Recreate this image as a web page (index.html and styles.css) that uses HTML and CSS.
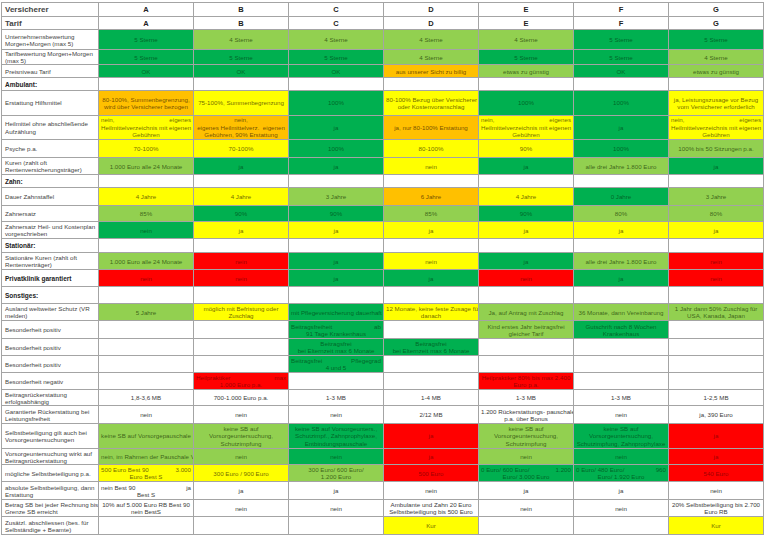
FILE: index.html
```html
<!DOCTYPE html>
<html lang="de">
<head>
<meta charset="utf-8">
<title>Tarifvergleich</title>
<link rel="stylesheet" href="styles.css">
</head>
<body>
<table class="cmp">
<colgroup><col class="c0"><col class="cx"><col class="cx"><col class="cx"><col class="cx"><col class="cx"><col class="cx"><col class="cx"></colgroup>
<tbody>
<tr class="r14 hd"><td class="lb big">Versicherer</td><td>A</td><td>B</td><td>C</td><td>D</td><td>E</td><td>F</td><td>G</td></tr>
<tr class="r13 hd"><td class="lb big">Tarif</td><td>A</td><td>B</td><td>C</td><td>D</td><td>E</td><td>F</td><td>G</td></tr>
<tr class="r20"><td class="lb">Unternehmensbewertung<br>Morgen+Morgen (max 5)</td><td class="dg">5 Sterne</td><td class="lg">4 Sterne</td><td class="lg">4 Sterne</td><td class="lg">4 Sterne</td><td class="lg">4 Sterne</td><td class="dg">5 Sterne</td><td class="dg">5 Sterne</td></tr>
<tr class="r15"><td class="lb">Tarifbewertung Morgen+Morgen<br>(max 5)</td><td class="dg">5 Sterne</td><td class="dg">5 Sterne</td><td class="dg">5 Sterne</td><td class="lg">4 Sterne</td><td class="dg">5 Sterne</td><td class="dg">5 Sterne</td><td class="lg">4 Sterne</td></tr>
<tr class="r13"><td class="lb">Preisniveau Tarif</td><td class="dg">OK</td><td class="dg">OK</td><td class="dg">OK</td><td class="or">aus unserer Sicht zu billig</td><td class="lg">etwas zu günstig</td><td class="dg">OK</td><td class="lg">etwas zu günstig</td></tr>
<tr class="r13 sec"><td class="lb">Ambulant:</td><td></td><td></td><td></td><td></td><td></td><td></td><td></td></tr>
<tr class="r25"><td class="lb">Erstattung Hilfsmittel</td><td class="or">80-100%, Summenbegrenzung,<br>wird über Versicherer bezogen</td><td class="ye">75-100%, Summenbegrenzung</td><td class="dg">100%</td><td class="ye">80-100% Bezug über Versicherer<br>oder Kostenvoranschlag</td><td class="dg">100%</td><td class="dg">100%</td><td class="ye">ja, Leistungszusage vor Bezug<br>vom Versicherer erforderlich</td></tr>
<tr class="r24"><td class="lb">Heilmittel ohne abschließende<br>Aufzählung</td><td class="ye"><span class="jl"><span>nein,</span><span>eigenes</span></span>Heilmittelverzeichnis mit eigenen<br>Gebühren</td><td class="or">nein,<br>eigenes Heilmittelverz.&nbsp; eigenen<br>Gebühren, 90% Erstattung</td><td class="dg">ja</td><td class="or">ja, nur 80-100% Erstattung</td><td class="ye"><span class="jl"><span>nein,</span><span>eigenes</span></span>Heilmittelverzeichnis mit eigenen<br>Gebühren</td><td class="dg">ja</td><td class="ye"><span class="jl"><span>nein,</span><span>eigenes</span></span>Heilmittelverzeichnis mit eigenen<br>Gebühren</td></tr>
<tr class="r18"><td class="lb">Psyche p.a.</td><td class="ye">70-100%</td><td class="ye">70-100%</td><td class="dg">100%</td><td class="ye">80-100%</td><td class="ye">90%</td><td class="dg">100%</td><td class="lg">100% bis 50 Sitzungen p.a.</td></tr>
<tr class="r17"><td class="lb">Kuren (zahlt oft<br>Rentenversicherungsträger)</td><td class="lg">1.000 Euro alle 24 Monate</td><td class="dg">ja</td><td class="dg">ja</td><td class="ye">nein</td><td class="dg">ja</td><td class="lg">alle drei Jahre 1.800 Euro</td><td class="dg">ja</td></tr>
<tr class="r13 sec"><td class="lb">Zahn:</td><td></td><td></td><td></td><td></td><td></td><td></td><td></td></tr>
<tr class="r18"><td class="lb">Dauer Zahnstaffel</td><td class="ye">4 Jahre</td><td class="ye">4 Jahre</td><td class="lg">3 Jahre</td><td class="or">6 Jahre</td><td class="ye">4 Jahre</td><td class="dg">0 Jahre</td><td class="lg">3 Jahre</td></tr>
<tr class="r16"><td class="lb">Zahnersatz</td><td class="lg">85%</td><td class="dg">90%</td><td class="dg">90%</td><td class="lg">85%</td><td class="dg">90%</td><td class="lg">80%</td><td class="lg">80%</td></tr>
<tr class="r17"><td class="lb">Zahnersatz Heil- und Kostenplan<br>vorgeschrieben</td><td class="dg">nein</td><td class="ye">ja</td><td class="ye">ja</td><td class="ye">ja</td><td class="ye">ja</td><td class="ye">ja</td><td class="ye">ja</td></tr>
<tr class="r14 sec"><td class="lb">Stationär:</td><td></td><td></td><td></td><td></td><td></td><td></td><td></td></tr>
<tr class="r17"><td class="lb">Stationäre Kuren (zahlt oft<br>Rentenverträger)</td><td class="lg">1.000 Euro alle 24 Monate</td><td class="rd">nein</td><td class="dg">ja</td><td class="ye">nein</td><td class="dg">ja</td><td class="lg">alle drei Jahre 1.800 Euro</td><td class="rd">nein</td></tr>
<tr class="r17 sec"><td class="lb">Privatklinik garantiert</td><td class="rd">nein</td><td class="rd">nein</td><td class="dg">ja</td><td class="dg">ja</td><td class="rd">nein</td><td class="dg">ja</td><td class="rd">nein</td></tr>
<tr class="r17 sec"><td class="lb">Sonstiges:</td><td></td><td></td><td></td><td></td><td></td><td></td><td></td></tr>
<tr class="r17"><td class="lb">Ausland weltweiter Schutz (VR<br>melden)</td><td class="lg">5 Jahre</td><td class="ye">möglich mit Befristung oder<br>Zuschlag</td><td class="dg">mit Pflegeversicherung dauerhaft</td><td class="ye">12 Monate, keine feste Zusage für<br>danach</td><td class="lg">Ja, auf Antrag mit Zuschlag</td><td class="lg">36 Monate, dann Vereinbarung</td><td class="lg">1 Jahr dann 50% Zuschlag für<br>USA, Kanada, Japan</td></tr>
<tr class="r18"><td class="lb">Besonderheit positiv</td><td></td><td></td><td class="dg"><span class="jl"><span>Beitragsfreiheit</span><span>ab</span></span>91 Tage Krankenhaus</td><td></td><td class="lg">Kind erstes Jahr beitragsfrei<br>gleicher Tarif</td><td class="dg">Gutschrift nach 8 Wochen<br>Krankenhaus</td><td></td></tr>
<tr class="r17"><td class="lb">Besonderheit positiv</td><td></td><td></td><td class="dg">Beitragsfrei<br>bei Elternzeit max 6 Monate</td><td class="dg">Beitragsfrei<br>bei Elternzeit max 6 Monate</td><td></td><td></td><td></td></tr>
<tr class="r17"><td class="lb">Besonderheit positiv</td><td></td><td></td><td class="dg"><span class="jl"><span>Beitragsfrei</span><span>Pflegegrad</span></span>4 und 5</td><td></td><td></td><td></td><td></td></tr>
<tr class="r17"><td class="lb">Besonderheit negativ</td><td></td><td class="rd"><span class="jl"><span>Heilpraktiker</span><span>max</span></span>1.000 Euro p.a.</td><td></td><td></td><td class="rd">Heilpraktiker 80% bis max 2.400<br>Euro p.a.</td><td></td><td></td></tr>
<tr class="r16"><td class="lb">Beitragsrückerstattung<br>erfolgsabhängig</td><td>1,8-3,6 MB</td><td>700-1.000 Euro p.a.</td><td>1-3 MB</td><td>1-4 MB</td><td>1-3 MB</td><td>1-3 MB</td><td>1-2,5 MB</td></tr>
<tr class="r18"><td class="lb">Garantierte Rückerstattung bei<br>Leistungsfreiheit</td><td>nein</td><td>nein</td><td>nein</td><td>2/12 MB</td><td>1.200 Rückerstattungs- pauschale<br>p.a. über Bonus</td><td>nein</td><td>ja, 390 Euro</td></tr>
<tr class="r25"><td class="lb">Selbstbeteiligung gilt auch bei<br>Vorsorgeuntersuchungen</td><td class="lg">keine SB auf Vorsorgepauschale</td><td class="lg">keine SB auf<br>Vorsorgeuntersuchung,<br>Schutzimpfung</td><td class="dg">keine SB auf Vorsorgeunters.,<br>Schutzimpf., Zahnprophylaxe,<br>Entbindungspauschale</td><td class="rd">ja</td><td class="lg">keine SB auf<br>Vorsorgeuntersuchung,<br>Schutzimpfung</td><td class="dg">keine SB auf<br>Vorsorgeuntersuchung,<br>Schutzimpfung, Zahnprophylaxe</td><td class="rd">ja</td></tr>
<tr class="r16"><td class="lb">Vorsorgeuntersuchung wirkt auf<br>Beitragsrückerstattung</td><td class="lg">nein, im Rahmen der Pauschale V</td><td class="lg">nein</td><td class="dg">nein</td><td class="rd">ja</td><td class="lg">nein</td><td class="dg">nein</td><td class="rd">ja</td></tr>
<tr class="r17"><td class="lb">mögliche Selbstbeteiligung p.a.</td><td class="ye"><span class="jl"><span>500 Euro Best 90</span><span>3.000</span></span>Euro Best S</td><td class="ye">300 Euro / 900 Euro</td><td class="lg">300 Euro/ 600 Euro/<br>1.200 Euro</td><td class="rd">500 Euro</td><td class="dg"><span class="jl"><span>0 Euro/ 600 Euro/</span><span>1.200</span></span>Euro/ 3.000 Euro</td><td class="dg"><span class="jl"><span>0 Euro/ 480 Euro/</span><span>960</span></span>Euro/ 1.920 Euro</td><td class="rd">540 Euro</td></tr>
<tr class="r18"><td class="lb">absolute Selbstbeteiligung, dann<br>Erstattung</td><td><span class="jl"><span>nein Best 90</span><span>ja</span></span>Best S</td><td>ja</td><td>ja</td><td>nein</td><td>ja</td><td>ja</td><td>nein</td></tr>
<tr class="r17"><td class="lb">Betrag SB bei jeder Rechnung bis<br>Grenze SB erreicht</td><td>10% auf 5.000 Euro RB Best 90<br>nein BestS</td><td>nein</td><td>nein</td><td>Ambulante und Zahn 20 Euro<br>Selbstbeteiligung bis 500 Euro</td><td>nein</td><td>nein</td><td>20% Selbstbeteiligung bis 2.700<br>Euro RB</td></tr>
<tr class="r18"><td class="lb">Zusätzl. abschliessen (bes. für<br>Selbständige + Beamte)</td><td></td><td></td><td></td><td class="ye">Kur</td><td></td><td></td><td class="ye">Kur</td></tr>
</tbody>
</table>
</body>
</html>
```
FILE: styles.css
```css
html, body {
  margin: 0;
  padding: 0;
  background: #ffffff;
}
body {
  font-family: "Liberation Sans", Arial, sans-serif;
  color: #3c3c3c;
}
.cmp {
  margin: 2px 0 0 1px;
  border-collapse: collapse;
  table-layout: fixed;
  width: 762px;
}
.c0 { width: 97px; }
.cx { width: 95px; }
.cmp td {
  border: 1px solid #a4a4a4;
  padding: 0 2px;
  font-size: 6.2px;
  line-height: 7px;
  text-align: center;
  vertical-align: middle;
  white-space: nowrap;
  overflow: hidden;
  background: #ffffff;
}
.cmp td.lb {
  text-align: left;
  padding-left: 3px;
  color: #444444;
}
.hd td {
  font-weight: bold;
  font-size: 7.5px;
  color: #222222;
}
.hd td.big { font-size: 8px; }
.sec td.lb {
  font-weight: bold;
  font-size: 6.5px;
  color: #222222;
}
.jl {
  display: flex;
  justify-content: space-between;
}
.cmp td.dg { background: #00b050; color: rgba(0, 50, 10, 0.6); }
.cmp td.lg { background: #92d050; color: rgba(20, 50, 0, 0.7); }
.cmp td.ye { background: #ffff00; color: rgba(60, 50, 0, 0.75); }
.cmp td.or { background: #ffc000; color: rgba(70, 40, 0, 0.75); }
.cmp td.rd { background: #ff0000; color: rgba(90, 0, 0, 0.6); }
.r13 td { height: 12px; }
.r14 td { height: 13px; }
.r15 td { height: 14px; }
.r16 td { height: 15px; }
.r17 td { height: 16px; }
.r18 td { height: 17px; }
.r20 td { height: 19px; }
.r24 td { height: 23px; line-height: 7.5px; }
.r25 td { height: 24px; line-height: 7.5px; }
```
